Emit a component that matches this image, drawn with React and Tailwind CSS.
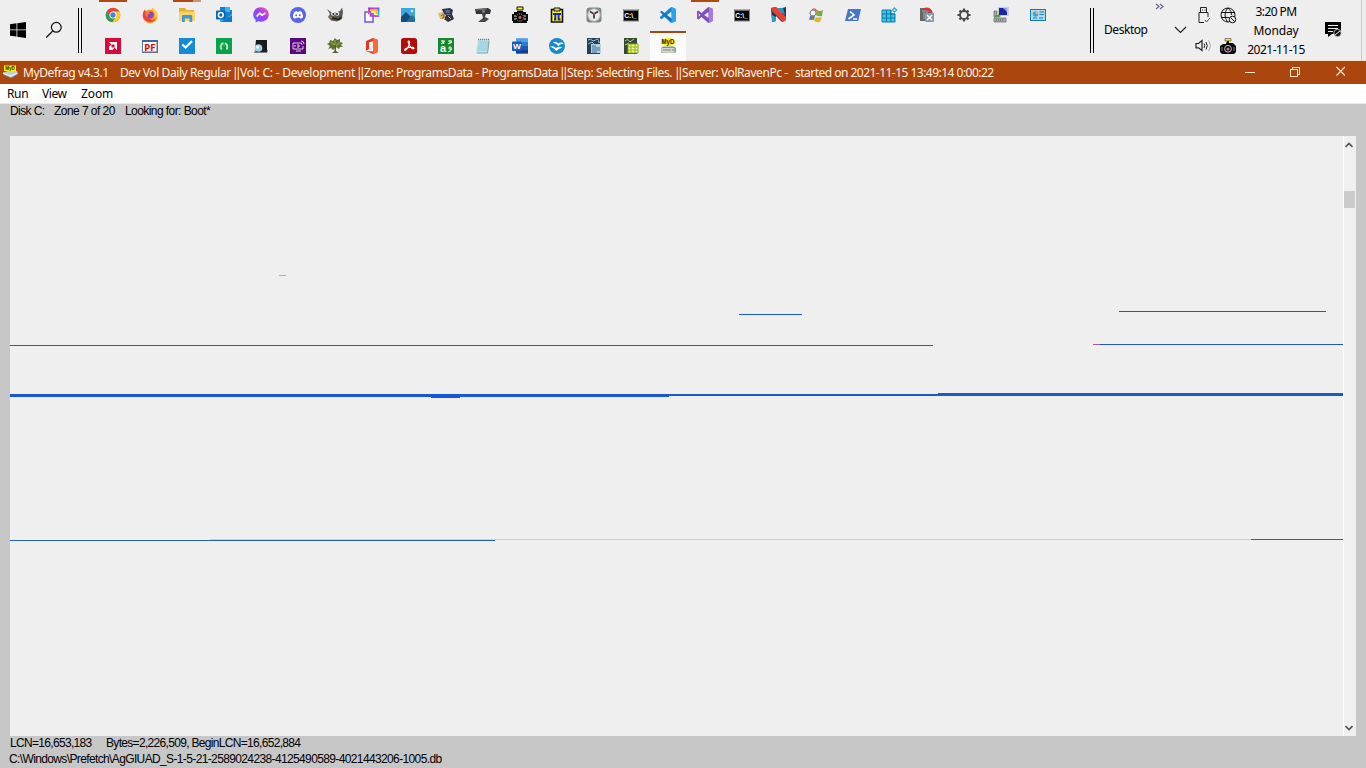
import React from "react";

const Svg = ({ children }) => (
  <svg width="16" height="16" viewBox="0 0 16 16" className="block shrink-0 overflow-visible">
    {children}
  </svg>
);

const Glyph = ({ x, y, size, fill, children, length, family = "Liberation Sans" }) => (
  <text x={x} y={y} fontSize={size} fill={fill} fontWeight="700" fontFamily={`"${family}", sans-serif`} textLength={length} lengthAdjust="spacingAndGlyphs">
    {children}
  </text>
);

const Chrome = () => (
  <Svg>
    <circle cx="8" cy="8" r="7.3" fill="#e5443a" />
    <path d="M1.7 4.4A7.3 7.3 0 0 0 7.4 15.3L10.6 9.8 8 8 4.9 9.6Z" fill="#2da24c" />
    <path d="M8 4.6H14.5A7.3 7.3 0 0 1 7.4 15.3L11 9.5Z" fill="#fbc82e" />
    <circle cx="8" cy="8" r="3.5" fill="#fff" />
    <circle cx="8" cy="8" r="2.7" fill="#4285e8" />
  </Svg>
);
const Firefox = () => (
  <Svg>
    <path d="M1 5.5 2.5 2.5 4.3 4 6 2.4 10.5 3 10 .7C14 3 15.8 5.5 15.5 9A7.4 7.4 0 0 1 .7 9Z" fill="#fb9a2b" />
    <path d="M1 6 2.5 3.3 4.5 5 8 6 5 10 10 13 14 12A7.4 7.4 0 0 1 .8 9Z" fill="#f0403f" />
    <path d="M10 1C14 3 15.8 5.5 15.3 9L12.5 11.5 13 7Z" fill="#fdd43b" />
    <circle cx="8.3" cy="8" r="3.4" fill="#8b45b5" />
    <path d="M3 5.2Q5.5 4.2 8.5 6.2L5.5 7.7 6 10.3Q3 9 3 5.2Z" fill="#fb7b2a" />
  </Svg>
);
const Folder = () => (
  <Svg>
    <path d="M0 1H6L7.5 3H15V14H0Z" fill="#e6ad35" />
    <path d="M1 4.5H16V14H0V5.5Z" fill="#fbd468" />
    <path d="M3 15V9.2Q3 8 4.2 8H12Q13.2 8 13.2 9.2V15H10.5V11.5H5.8V15Z" fill="#4296dc" />
  </Svg>
);
const Outlook = () => (
  <Svg>
    <path d="M4 0H14V3H16V15H4Z" fill="#1682d3" />
    <path d="M9 0H14V5H9Z" fill="#35b7ef" />
    <path d="M4 8 10 12 16 7V15H4Z" fill="#3cbff2" />
    <path d="M4 15 16 8.5V15Z" fill="#1476c8" />
    <rect x="0" y="3.5" width="9.5" height="9" rx="1" fill="#0966b4" />
    <circle cx="4.8" cy="8" r="2.4" fill="none" stroke="#fff" strokeWidth="1.5" />
  </Svg>
);
const Messenger = () => (
  <Svg>
    <defs>
      <linearGradient id="msg" x1="0" y1="1" x2="1" y2="0"><stop stopColor="#5268ff" /><stop offset=".55" stopColor="#a43cf5" /><stop offset="1" stopColor="#ff6188" /></linearGradient>
    </defs>
    <path d="M8 .3C3.6.3.2 3.4.2 7.5c0 2.1.9 4 2.4 5.3V15.5L5 14.3c5.4 1.5 10.8-1.7 10.8-6.8C15.8 3.4 12.4.3 8 .3Z" fill="url(#msg)" />
    <path d="M3.6 9.5 6.8 6.2 9 8.2 12.4 6" stroke="#fff" strokeWidth="1.7" fill="none" />
  </Svg>
);
const Discord = () => (
  <Svg>
    <circle cx="8" cy="8" r="8" fill="#5865e8" />
    <path d="M4.5 4.8 6.6 4 7 4.7H9L9.5 4 11.6 4.8Q13.2 7.5 13 10.5L10.8 11.7 10 10.7H6L5.2 11.7 3 10.5Q2.8 7.5 4.5 4.8Z" fill="#fff" />
    <circle cx="6.2" cy="8.2" r="1" fill="#5865e8" /><circle cx="9.8" cy="8.2" r="1" fill="#5865e8" />
  </Svg>
);
const Gimp = () => (
  <Svg>
    <path d="M0 2 4 5 9 5.5 13 4 15 .5 16 5 15 12 10 14.5 4 13.5 1 10 3 7Z" fill="#5c5950" />
    <circle cx="6" cy="6.7" r="2" fill="#eee" /><circle cx="10.3" cy="6.7" r="2" fill="#eee" />
    <circle cx="6.3" cy="7" r=".9" fill="#111" /><circle cx="10" cy="7" r=".9" fill="#111" />
    <path d="M5 11 12 12.5 14 10" stroke="#211f1c" strokeWidth="1.4" fill="none" />
    <path d="M2 10 5 11" stroke="#b67731" strokeWidth="1.5" />
  </Svg>
);
const ColorShape = () => (
  <Svg>
    <defs><linearGradient id="cs" x1="0" x2="1" y1="0" y2=".6"><stop stopColor="#843bd7" /><stop offset=".5" stopColor="#e83dbf" /><stop offset=".75" stopColor="#4267f5" /><stop offset="1" stopColor="#25c6e8" /></linearGradient></defs>
    <path d="M5 1.5H14.5V9H9V7H5Z" fill="#fff3a0" stroke="url(#cs)" strokeWidth="1.8" />
    <path d="M1 5H6.5V9H9V15H1Z" fill="#fff" stroke="#7257dd" strokeWidth="1.5" />
    <path d="M4.5 1.5V7H9V9.5H14.5" fill="none" stroke="#dc48cb" strokeWidth="1" />
    <path d="M6 3.5H12.5V7" stroke="#f3bf30" strokeWidth="1.4" fill="none" />
  </Svg>
);
const Photos = () => (
  <Svg>
    <rect y="1" width="14" height="14" fill="#3fa7e0" /><path d="M0 10 5 5 14 14V15H0Z" fill="#154c7b" /><path d="M5 15 11 8 14 11V15Z" fill="#226fa5" />
    <path d="M11 2.2 11.6 3.4 13 4 11.6 4.6 11 5.8 10.4 4.6 9 4 10.4 3.4Z" fill="#fff" />
  </Svg>
);
const CamTool = () => (
  <Svg>
    <path d="M4 2 12 1 15 3 14 7 6 8Z" fill="#34363f" /><path d="M7 3 12 3V6H8Z" fill="#5163a8" />
    <path d="M8 8 14 7 16 12 10 15 6 12Z" fill="#30323a" /><path d="M0 6 5 5 7 8 7 12 2 12Z" fill="#dcbb76" />
    <path d="M3 9Q6 6 6 9T4 11" stroke="#7b4b26" fill="none" /><path d="M10 9 13 12" stroke="#a6adbb" />
  </Svg>
);
const Webcam = () => (
  <Svg>
    <path d="M0 2 13 1 16 3 15 7 1 7Z" fill="#34333a" /><path d="M7 7H11L10 10 14 12 10 15H3L8 11Z" fill="#46464a" />
    <circle cx="8.5" cy="4.5" r="1.7" fill="#74757c" /><path d="M1 3 12 2" stroke="#777" />
  </Svg>
);
const PixelCamera = () => (
  <Svg>
    <path d="M5 0H11V3H5Z" fill="#f8ee20" stroke="#111" strokeWidth="1" />
    <path d="M2 5H5V4H11V5H14V7H16V14H15V16H1V14H0V7H2Z" fill="#0b0b0b" />
    <circle cx="8" cy="10.5" r="3.7" fill="none" stroke="#bbb" strokeDasharray="1 1" />
    <path d="M3 8V14M13 8V14" stroke="#ddd" strokeDasharray="2 1" /><circle cx="8" cy="10.5" r="1.4" fill="#e55757" />
  </Svg>
);
const TrayCamera = () => (
  <Svg>
    <path d="M5 .5H11V3H5Z" fill="#f4ec24" stroke="#555" strokeWidth=".7" /><path d="M7 3H9V5H13L16 8V14L14 16H2L0 14V8L3 6H6Z" fill="#090909" />
    <circle cx="8" cy="10.8" r="3.4" fill="none" stroke="#c4c4c4" /><circle cx="8" cy="11" r="1.5" fill="#cf7781" /><path d="M2 9V13M14 9V13" stroke="#888" />
  </Svg>
);
const PiNote = () => (
  <Svg>
    <path d="M2.5 2.5H13.5V15H2.5Z" fill="#fffb16" stroke="#111" strokeWidth="1.6" /><path d="M5 1H11V4H5Z" fill="#dcdc70" stroke="#111" />
    <path d="M4 7H12M6.3 7V12.5H5M9.6 7V12.5H11.5" stroke="#1622c8" strokeWidth="1.9" fill="none" />
  </Svg>
);
const Clock = () => (
  <Svg><rect x=".5" y=".5" width="15" height="15" rx="3" fill="#808588" /><circle cx="8" cy="8" r="6.3" fill="#e8e9e9" stroke="#a9adae" /><path d="M4 4.5 8 7 12 4.500M8 7V11.500" stroke="#3b3c3d" strokeWidth="1.8" fill="none" /><circle cx="8" cy="7" r="1.1" fill="#b3584a" /></Svg>
);
const Cmd = () => (
  <Svg><rect x=".5" y="2.5" width="15" height="11.5" fill="#050505" stroke="#888" /><path d="M1 3H15" stroke="#d8d8d8" /><Glyph x="1.3" y="11.2" size="7.5" fill="#fff" length="12.5">C:\_</Glyph></Svg>
);
const VsCode = () => (
  <Svg><path d="M11.3 0 16 2V14L11.3 16 4.7 9.8 1.6 12.2 0 11.3V9.9L9 1.7Z" fill="#1687cf" /><path d="M0 5 1.6 3.8 11.5 11.5V16L4.7 9.8Z" fill="#1376bd" /><path d="M11.3 0 16 2V14L11.3 16Z" fill="#28a5ee" /><path d="M11.4 4.8V11.2L7.1 8Z" fill="#eee" /></Svg>
);
const VisualStudio = () => (
  <Svg><path d="M11.3 0 16 2V14L11.3 16 4.5 10 1.5 12.5 0 11.7V4.3L1.5 3.5 4.5 6Z" fill="#8051b9" /><path d="M1.7 6.2 3.3 8 1.7 9.8ZM11.5 5V11L7.2 8Z" fill="#eee" /><path d="M12 0 16 2V14L12 16Z" fill="#a77bdc" /></Svg>
);
const RedN = () => (
  <Svg><path d="M0 1 5 0 11 6V1L15 0V13L11 15 5 9V14L1 15Z" fill="#293849" /><path d="M0 1 5 0 15 10V13L12 15 1 4Z" fill="#e54137" /><path d="M6 1 12 1 14 8 11 6Z" fill="#269ac4" /><path d="M1 8 5 10V14L1 15Z" fill="#2c9cc0" /></Svg>
);
const AmdIcon = () => (<Svg><rect width="16" height="16" fill="#d60b3b" /><path d="M4 4H12V12L9.5 9.5V6.5H6.5ZM4 8.5 6.5 6.5V9.5H9.5L7.5 12H4Z" fill="#fff" /></Svg>);
const PfIcon = () => (<Svg><rect x=".5" y="2.5" width="15" height="12" fill="#fff" stroke="#5d7ba5" /><path d="M0 3H16" stroke="#3469a6" strokeWidth="2" /><path d="M15 4V14H1" fill="none" stroke="#666" /><Glyph x="2.2" y="12.5" size="9.5" fill="#d9150b" length="11.5" family="DejaVu Sans">PF</Glyph></Svg>);
const Todo = () => (<Svg><rect width="16" height="16" fill="#168bd3" /><path d="M3.3 6.5 6.5 9.5 13 3.2" fill="none" stroke="#fff" strokeWidth="2.3" /></Svg>);
const GreenArc = () => (<Svg><rect width="16" height="16" fill="#08a14c" /><path d="M5.700 11.500A4 4 0 0 1 7.500 5" fill="none" stroke="#a6dfbd" strokeWidth="2" /><path d="M9 5.200Q12.500 7 10.700 11.500" fill="none" stroke="#fff" strokeWidth="1.5" /><path d="M8 5V8" stroke="#58be83" /></Svg>);
const BlackPc = () => (<Svg><path d="M3 2H14V12H2Z" fill="#17191b" /><path d="M2 12H15L14 15H1Z" fill="#777b7d" /><path d="M3 13H14" stroke="#202326" strokeWidth="2" /><circle cx="5.5" cy="10" r="3.8" fill="#9bd0e6" /><circle cx="4.6" cy="9" r="1.6" fill="#edfaff" /></Svg>);
const PurpleTv = () => (<Svg><rect width="16" height="16" fill="#5b087f" /><path d="M3 5H11M13 8V11H3V5M6 13H11" fill="none" stroke="#e0c9eb" /><path d="M5 7V9M7 7H9V9H7M11 3Q14 3 14 6M11 5Q12 5 12 7" stroke="#fff" fill="none" strokeWidth=".8" /></Svg>);
const Tree = () => (<Svg><path d="M0 6 2 5 3 2 6 3 8 0 10 2 13 1 13 4 16 5 14 7 16 9 13 9 12 11 9 9 6 12 4 10 1 11 3 8Z" fill="#5b7534" /><path d="M4 4 7 7M13 4 9 8M8 2V7" stroke="#86984a" strokeWidth="1.5" /><path d="M7.5 7V13L5 15H12L9 13V7" fill="#6b572e" /></Svg>);
const Office = () => (<Svg><path d="M2 3 9 0 14 2V14L9 16 2 13 9 13.5V3L5 4.5V11L2 13Z" fill="#dd3b20" /><path d="M9 0 14 2V14L9 16Z" fill="#f36b39" /></Svg>);
const Acrobat = () => (<Svg><rect width="16" height="16" rx="2.5" fill="#b50b09" /><path d="M7.5 3Q9.5 3 8 7Q6 12 3.7 12.5Q2.8 10.5 8 9.5Q13 8.7 13 10.5Q11 12 8.3 7Q6.4 3.3 7.5 3Z" fill="none" stroke="#fff" strokeWidth="1.1" /></Svg>);
const Translator = () => (<Svg><rect width="16" height="16" fill="#16882c" /><Glyph x="2" y="14" size="11" fill="#fff">a</Glyph><path d="M3 3H7M4 2 6 6M3 6 7 3M10 3H14M12 2V6M10 6 14 4M10 10H14M12 8V14M10 14 14 11" stroke="#d8f0dc" strokeWidth="1.1" /></Svg>);
const Notepad = () => (<Svg><path d="M3 1H15L13 15H1Z" fill="#b7e6ef" /><path d="M4 4H13M4 6H13M3 8H13M3 10H12M2 12H12" stroke="#73b7c7" strokeWidth=".6" /><path d="M3 1.5H14" stroke="#737b7b" strokeDasharray="1 1" strokeWidth="1.5" /><path d="M14 3 12.5 15H2" stroke="#8b9da0" fill="none" /></Svg>);
const Word = () => (<Svg><rect x="4" y=".5" width="12" height="15" rx="1" fill="#2b7cd3" /><path d="M4 .5H16V4H4Z" fill="#48a5ec" /><path d="M4 8H16V12H4Z" fill="#195bb1" /><path d="M4 12H16V15.5H4Z" fill="#143e8c" /><rect y="3.5" width="10" height="9.5" rx="1" fill="#185abd" /><Glyph x="1" y="11" size="8" fill="#fff" length="8">W</Glyph></Svg>);
const OpenOffice = () => (<Svg><circle cx="8" cy="8" r="8" fill="#168acb" /><path d="M4 4.5Q7 2.800 9 5.500Q11.500 3.500 15 5.500Q11 5.700 9.200 8Q7.500 5 4 4.500ZM.6 9Q4.500 7 7 10Q10 8 13.500 9.500Q9.500 10.700 7.300 13Q4.500 9.300 .6 9Z" fill="#fff" /></Svg>);
const Writer = () => (<Svg><path d="M1 0H14V16H1Z" fill="#253f58" /><path d="M2 2Q5 0 7 3L12 1M2 6 6 4 9 7" stroke="#9bc4d8" fill="none" /><path d="M5 6H15V15H5Z" fill="#b9d0df" /><path d="M6 8H10M6 10H14M6 12H14M11 14H6" stroke="#386f98" /><path d="M12 0V5H14" fill="#7ca0b6" /></Svg>);
const Calc = () => (<Svg><path d="M1 0H14V16H1Z" fill="#344a30" /><path d="M2 3Q5 0 7 4L11 1M2 7 6 5" stroke="#b6cdb7" fill="none" /><path d="M5 6H15V15H5Z" fill="#eff5b8" stroke="#86a900" /><path d="M8 6V15M12 6V15M5 9H15M5 12H15" stroke="#92b900" /></Svg>);
const MyDefrag = () => (<Svg><ellipse cx="8" cy="4" rx="7.3" ry="4" fill="#fff500" /><Glyph x="1.5" y="6.3" size="6.3" fill="#171700" length="12.8">MyD</Glyph><path d="M1 10 3 8.5H14L16 10V14.5H1Z" fill="#8b9288" /><rect x="1.5" y="10" width="13" height="4" fill="#d0d6ce" /><path d="M3 12H11" stroke="#81907b" /><path d="M12 12H14" stroke="#42b642" /></Svg>);
const MyDefragSmall = () => (
  <svg width="16" height="16" viewBox="0 0 16 16" className="block">
    <path d="M2 1.5H14V7H2Z" fill="#fff500" /><Glyph x="3.200" y="6" size="5" fill="#282600" length="9.500">MyD</Glyph>
    <path d="M1 8.500 6 7H15L16 10 9 14 1 10.500Z" fill="#c4ced2" /><path d="M1 9.500 9 12 15 9" fill="none" stroke="#f1f5f4" /><path d="M1 10.500 9 14 15.500 10.500" fill="none" stroke="#77827d" />
  </svg>
);
const WinColor = () => (<Svg><path d="M4 2Q7 0 9 3L8 8Q5 6 1 7Z" fill="#ed6b2f" /><path d="M9 3Q12 5 15 3L14 9Q10 10 8 8Z" fill="#7eab39" /><path d="M2 9Q5 7 7 9L6 13Q3 12 1 13Z" fill="#4384c5" /><path d="M8 10Q11 11 14 10L12 15Q9 16 6 14Z" fill="#e0b530" /><circle cx="5" cy="6" r="3" fill="#f2f7fc" stroke="#79838f" /><path d="M5 9 3 13" stroke="#b7682c" strokeWidth="1.5" /></Svg>);
const PowerShell = () => (<Svg><path d="M3 2H16L13.2 14H0Z" fill="#4774cc" /><path d="M5 4.5 9 8 3.5 12M8 12H12" fill="none" stroke="#fff" strokeWidth="1.6" /></Svg>);
const Registry = () => (<Svg><path d="M0 3H9V7H13V15H0Z" fill="#45c1e5" stroke="#087ca9" /><path d="M4.5 3V15M8.8 3V15M0 7H13M0 11H13" stroke="#087ca9" /><path d="M12.5 0 15.5 3 12.5 6 9.5 3Z" fill="#2ba9d5" /><circle cx="12.5" cy="3" r="1" fill="#ddf7ff" /></Svg>);
const RegistryTool = () => (<Svg><path d="M1 1H10L13 4V14H1Z" fill="#676567" /><path d="M3 4H10M5 5V12M8 5V12" stroke="#aaa" /><path d="M5 1Q11-1 14 6L11 5Q9 3 5 3Z" fill="#d3343b" /><rect x="6" y="6" width="9" height="9" rx="1" fill="#8299b6" /><path d="M8 8 13 13M13 8 8 13" stroke="#fff" strokeWidth="1.5" /></Svg>);
const Gear = () => (<Svg><g transform="translate(8 8)"><circle r="4" fill="none" stroke="#4a4a4a" strokeWidth="1.8" /><path d="M0-4V-6.5M0 4V6.5M4 0H6.5M-4 0H-6.5M2.9-2.9 4.5-4.5M-2.9-2.9-4.5-4.5M2.9 2.9 4.5 4.5M-2.9 2.9-4.5 4.5" stroke="#4a4a4a" strokeWidth="2.2" /></g></Svg>);
const Remote = () => (<Svg><path d="M5 0H16V9H5Z" fill="#ccd0ce" /><path d="M6 1H14V8H6Z" fill="#1727a3" /><path d="M10 1H14V5Z" fill="#879fed" /><path d="M1 4H4V10H1ZM1 11H13V15H1Z" fill="#a5aaa6" stroke="#666" strokeWidth=".7" /><path d="M3 13H11" stroke="#555" strokeDasharray="1 1" /><path d="M2 8H5V7L8 9 5 11V10H2Z" fill="#4ba43c" /></Svg>);
const ControlPanel = () => (<Svg><rect x=".5" y="2.5" width="15" height="11" fill="#a9def2" stroke="#1678ac" /><circle cx="5.5" cy="7" r="2.7" fill="#429fca" /><path d="M5.5 7V4A3 3 0 0 1 8.5 7Z" fill="#efb450" /><path d="M9.5 5H14M9.5 7.5H14M3 11H7M9 11H13" stroke="#227aac" strokeWidth="1.2" /></Svg>);

const topIcons = [Chrome, Firefox, Folder, Outlook, Messenger, Discord, Gimp, ColorShape, Photos, CamTool, Webcam, PixelCamera, PiNote, Clock, Cmd, VsCode, VisualStudio, Cmd, RedN, WinColor, PowerShell, Registry, RegistryTool, Gear, Remote, ControlPanel];
const bottomIcons = [AmdIcon, PfIcon, Todo, GreenArc, BlackPc, PurpleTv, Tree, Office, Acrobat, Translator, Notepad, Word, OpenOffice, Writer, Calc, MyDefrag];

const IconRow = ({ icons, open = [], active = -1 }) => (
  <div className="flex">
    {icons.map((Icon, i) => (
      <div key={i} className="flex h-[31px] w-[37px] flex-col">
        <div className={`h-full w-[36px] ${i === active ? "bg-[#fbfbfb]" : ""}`}>
          <div className={`flex h-[2px] ${i === active ? "bg-[#a7460f]" : open.includes(i) ? "mx-1 bg-[#b04a12]" : ""}`}>
            {i === 2 && open.includes(2) && <span className="ml-auto w-2 bg-[#c99578]" />}
          </div>
          <div className="pl-[10px] pt-[5px]"><Icon /></div>
        </div>
      </div>
    ))}
  </div>
);

const Taskbar = () => (
  <header className="flex h-[61px] shrink-0 border-b border-[#f7e3c4] bg-[#eeeeee]">
    <div className="flex w-[95px] shrink-0 items-center pl-[10px]">
      <svg width="16" height="16" viewBox="0 0 16 16" className="mb-px"><path d="M0 2.2 6.5 1.3V7.5H0ZM7.3 1.2 16 0V7.5H7.3ZM0 8.3H6.5V14.6L0 13.7ZM7.3 8.3H16V16L7.3 14.8Z" fill="#000" /></svg>
      <svg width="18" height="18" viewBox="0 0 18 18" className="ml-[19px]"><circle cx="11.3" cy="6.3" r="4.9" fill="none" stroke="#111" strokeWidth="1.2" /><path d="M7.7 10 1.3 16.5" stroke="#111" strokeWidth="1.2" /></svg>
      <div className="ml-[15px] h-[45px] w-[4px] border-x border-black" />
    </div>
    <div className="w-[995px] shrink-0">
      <IconRow icons={topIcons} open={[0, 2, 16]} />
      <IconRow icons={bottomIcons} active={15} />
    </div>
    <div className="flex w-[272px] shrink-0 border-r border-[#c8c8c8]">
      <div className="mt-2 h-[45px] w-[4px] border-x border-black" />
      <div className="flex w-[96px] flex-col pl-[10px]">
        <svg width="9" height="8" viewBox="0 0 9 8" className="ml-[51px] mt-[3px]"><path d="M1 1 4 3.5 1 6M5 1 8 3.5 5 6" fill="none" stroke="#646594" strokeWidth="1.2" /></svg>
        <div className="mt-[9px] flex items-center">
          <span className="w-[70px] text-[12px] leading-[20px] tracking-[-0.45px]">Desktop</span>
          <svg width="13" height="8" viewBox="0 0 13 8" className="shrink-0"><path d="M1 1 6.5 6.5 12 1" fill="none" stroke="#222" strokeWidth="1.2" /></svg>
        </div>
      </div>
      <div className="grid h-[50px] w-[42px] grid-cols-[25px_17px] grid-rows-[31px_31px] pl-[5px] pt-[7px]">
        <svg width="16" height="17" viewBox="0 0 16 17"><path d="M5.5 5.5V.500H11.500V5.500M4 15.500V5.500H13V10M4 15.500H9M7 3H8M9.500 3H10.500" fill="none" stroke="#222" /><path d="M10 13 11.500 15 15 11" fill="none" stroke="#555" /></svg>
        <svg width="17" height="17" viewBox="0 0 17 17"><circle cx="8" cy="8" r="7" fill="none" stroke="#111" /><path d="M1 5.5H15M1 10.5H9M7.500 1Q2.500 8 7.500 15M8 1Q12 4 11.5 8" fill="none" stroke="#111" /><circle cx="12.5" cy="12.5" r="3.3" fill="#eee" stroke="#111" /><path d="M10.500 10.500 14.500 14.500" stroke="#111" /></svg>
        <svg width="17" height="16" viewBox="0 0 17 16"><path d="M1 5.5H3.5L7 2.5V12.5L3.5 9.8H1Z" fill="none" stroke="#222" strokeWidth="1.200" /><path d="M9 5.5Q10.500 7.5 9 10M11 4Q13.500 7.5 11 11.5" fill="none" stroke="#222" /><path d="M13.500 2.5Q17 7.5 13.500 13" fill="none" stroke="#aaa" /></svg>
        <TrayCamera />
      </div>
      <div className="flex w-[86px] flex-col items-center pl-[2px] pt-[2px] text-[12px] leading-[19px]">
        <span className="tracking-[-0.6px]">3:20 PM</span><span className="tracking-[-0.15px]">Monday</span><span className="whitespace-nowrap tracking-[-0.5px]">2021-11-15</span>
      </div>
      <svg width="17" height="18" viewBox="0 0 17 18" className="ml-[7px] mt-[21px]"><path d="M0 1H16V13H7L3 16V13H0Z" fill="#050505" /><path d="M3 4.5H13M3 7.5H13M3 10.5H8" stroke="#eee" /><circle cx="12.5" cy="12" r="3.7" fill="#111" stroke="#eee" strokeWidth=".7" /><path d="M10 14 15 10" stroke="#eee" /></svg>
    </div>
  </header>
);

const Bars = () => <span className="-ml-[2px] w-[8px] shrink-0 tracking-[-3.6px]">||</span>;

const TitleBar = () => (
  <div className="flex h-[23px] shrink-0 items-center bg-[#ab470e] text-[12px] leading-[22px] text-[#fff3e5]">
    <div className="mb-px ml-[2px] w-[21px]"><MyDefragSmall /></div>
    <div className="w-[97px] whitespace-nowrap tracking-[-0.4px]">MyDefrag v4.3.1</div>
    <div className="flex w-[1125px] whitespace-pre">
      <span className="w-[114px] tracking-[-0.42px]">Dev Vol Daily Regular </span><Bars />
      <span className="w-[118px] tracking-[-0.24px]">Vol: C: - Development </span><Bars />
      <span className="w-[197px] tracking-[-0.42px]">Zone: ProgramsData - ProgramsData </span><Bars />
      <span className="w-[109px] tracking-[-0.4px]">Step: Selecting Files. </span><Bars />
      <span className="w-[113px] tracking-[-0.43px]">Server: VolRavenPc -  </span>
      <span className="tracking-[-0.52px]">started on 2021-11-15 13:49:14 0:00:22</span>
    </div>
    <svg width="100" height="12" viewBox="0 0 100 12" className="mb-[2px]" shapeRendering="crispEdges" fill="none" stroke="#ffe5ca"><path d="M0 6.5H10M45.5 3.5H52.5V10.5H45.5ZM47.5 3V1.5H54.5V8.5H53" /><path d="M91.500 1 100 9.500M100 1 91.500 9.500" shapeRendering="auto" strokeWidth="1.2" /></svg>
  </div>
);

const DiskMap = () => (
  <svg width="1333" height="600" viewBox="10 136 1333 600" className="block shrink-0 bg-[#efefef]" shapeRendering="crispEdges">
    <rect x="279" y="275" width="7" height="1" fill="#34dce5" />
    <rect x="739" y="314" width="63" height="1" fill="#1f5ac8" />
    <rect x="1119" y="311" width="207" height="1" fill="#1f5ac0" />
    <rect x="10" y="345" width="923" height="1" fill="#1f5cc4" />
    <rect x="1093" y="344" width="7" height="1" fill="#b054a0" />
    <rect x="1100" y="344" width="243" height="1" fill="#2458c0" />
    <rect x="10" y="394" width="659" height="3" fill="#1d56d2" />
    <rect x="431" y="395" width="29" height="3" fill="#1057e4" />
    <rect x="669" y="394" width="269" height="2" fill="#1d56d2" />
    <rect x="938" y="393" width="405" height="3" fill="#1d56d2" />
    <rect x="10" y="540" width="485" height="1" fill="#2460ad" />
    <rect x="210" y="539" width="1041" height="1" fill="#f0e02c" />
    <rect x="1251" y="539" width="92" height="1" fill="#2a62b0" />
  </svg>
);

export default function App() {
  return (
    <div className="flex h-[768px] w-[1366px] flex-col overflow-hidden bg-[#c7c7c7] font-['Noto_Sans',sans-serif] text-black">
      <Taskbar />
      <TitleBar />
      <nav className="flex h-[20px] shrink-0 border-b border-[#e8e8e8] bg-white pl-[7px] text-[12px] leading-[19px]">
        <span className="w-[35px] tracking-[-0.35px]">Run</span><span className="w-[39px] tracking-[-0.4px]">View</span><span className="tracking-[-0.1px]">Zoom</span>
      </nav>
      <div className="flex h-[32px] shrink-0 pl-[10px] font-['Liberation_Sans',sans-serif] text-[12px] leading-[14px]">
        <span className="w-[44px] tracking-[-0.6px]">Disk C:</span><span className="w-[71px] tracking-[-0.55px]">Zone 7 of 20</span><span className="tracking-[-0.57px]">Looking for: Boot*</span>
      </div>
      <main className="ml-[10px] flex h-[600px] w-[1346px] shrink-0">
        <DiskMap />
        <div className="flex w-[13px] flex-col items-start border-l border-[#fcfcfc] bg-[#f0f0f0]">
          <svg width="8" height="6" viewBox="0 0 8 6" className="ml-px mt-[6px]"><path d="M.5 5 4 1.5 7.5 5" fill="none" stroke="#555" strokeWidth="1.7" /></svg>
          <div className="mt-[43px] h-[17px] w-[11px] bg-[#cbcbcb]" />
          <svg width="8" height="6" viewBox="0 0 8 6" className="mb-[5px] ml-px mt-auto"><path d="M.5 1 4 4.5 7.5 1" fill="none" stroke="#555" strokeWidth="1.7" /></svg>
        </div>
      </main>
      <footer className="flex h-[32px] shrink-0 flex-col pl-[10px] font-['Liberation_Sans',sans-serif] text-[12px] leading-[16px]">
        <div className="-mt-px flex h-4"><span className="w-[96px] tracking-[-0.68px]">LCN=16,653,183</span><span className="tracking-[-0.68px]">Bytes=2,226,509, BeginLCN=16,652,884</span></div>
        <div className="-ml-px tracking-[-0.63px]">C:\Windows\Prefetch\AgGIUAD_S-1-5-21-2589024238-4125490589-4021443206-1005.db</div>
      </footer>
    </div>
  );
}
